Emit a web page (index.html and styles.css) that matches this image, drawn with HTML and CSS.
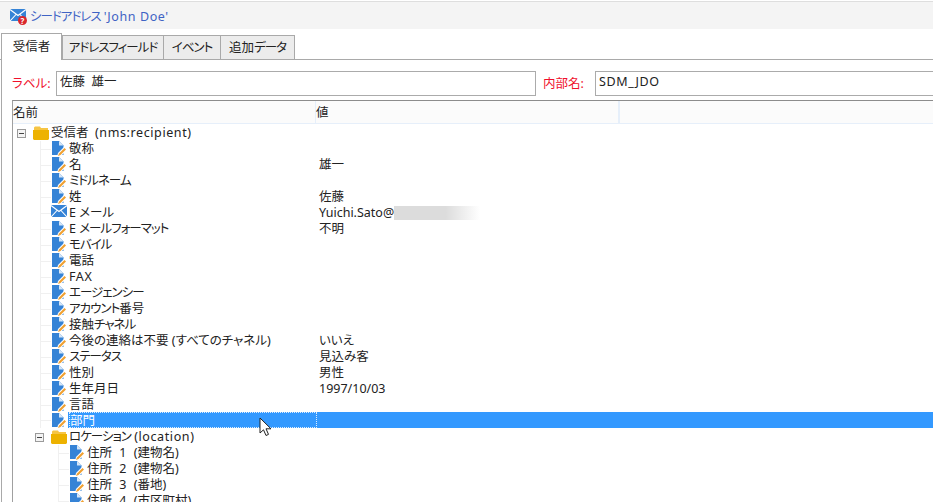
FILE: index.html
```html
<!DOCTYPE html>
<html>
<head>
<meta charset="UTF-8">
<title>シードアドレス</title>
<link rel="stylesheet" href="styles.css">
</head>
<body>
<svg class="defs" width="0" height="0">
	<symbol id="doc" viewBox="0 0 16 16">
		<path d="M0 0H7L11.500 4.500V14H0Z" fill="#3583d6"/>
		<path d="M7 0V4.500H11.500Z" fill="#d5e6f7"/>
		<path d="M5 16L6 12L12 6L15 9L9 15Z" fill="#fff"/>
		<path d="M6 15L7 12.500L12.500 7L14 8.500L8.500 14Z" fill="#f0a030"/>
	</symbol>
	<symbol id="folder" viewBox="0 0 16 14">
		<path d="M1 4V1.500L2 .5H7L8 2H15V4Z" fill="#f6c544"/>
		<path d="M0 4H16V13L15 14H1L0 13Z" fill="#edb200"/>
	</symbol>
	<symbol id="mail" viewBox="0 0 16 12">
		<path d="M0 0H16V12H0Z" fill="#3583d6"/>
		<path d="M0 .5L8 6.500L16 .5M0 12L6 5.500M16 12L10 5.500" fill="none" stroke="#fff" stroke-width="1.100"/>
	</symbol>
</svg>

<div class="titlebar">
	<span class="title-icon">
		<svg class="title-mail" width="16" height="12"><use href="#mail"/></svg>
		<span class="title-badge">?</span>
	</span>
	<span class="title-text"><span class="kana">シードアドレス</span> <span class="lat">'John Doe'</span></span>
</div>

<div class="tabs">
	<div class="tab active">受信者</div>
	<div class="tab tab-address"><span class="kana">アドレスフィールド</span></div>
	<div class="tab tab-event"><span class="kana">イベント</span></div>
	<div class="tab tab-extra">追加<span class="kana">データ</span></div>
</div>

<div class="panel">
	<div class="fields">
		<label class="field-label">ラベル:</label>
		<div class="input label-input">佐藤&nbsp; 雄一</div>
		<label class="field-label name-label">内部名:</label>
		<div class="input name-input lat">SDM_JDO</div>
	</div>

	<div class="tree">
		<div class="tree-head">
			<div class="col col-name">名前</div>
			<div class="col col-value">値</div>
			<div class="col col-rest"></div>
		</div>
		<div class="tree-body">
			<div class="row lvl0"><span class="toggle"></span><svg class="ico-folder"><use href="#folder"/></svg><span class="name">受信者&nbsp; <span class="lat">(nms:recipient)</span></span></div>

			<div class="row lvl1"><span class="elbow"></span><svg class="ico"><use href="#doc"/></svg><span class="name">敬称</span></div>
			<div class="row lvl1"><span class="elbow"></span><svg class="ico"><use href="#doc"/></svg><span class="name">名</span><span class="value">雄一</span></div>
			<div class="row lvl1"><span class="elbow"></span><svg class="ico"><use href="#doc"/></svg><span class="name kana">ミドルネーム</span></div>
			<div class="row lvl1"><span class="elbow"></span><svg class="ico"><use href="#doc"/></svg><span class="name">姓</span><span class="value">佐藤</span></div>
			<div class="row lvl1"><span class="elbow"></span><svg class="ico-mail"><use href="#mail"/></svg><span class="name">E メール</span><span class="value">Yuichi.Sato@<span class="blur"></span></span></div>
			<div class="row lvl1"><span class="elbow"></span><svg class="ico"><use href="#doc"/></svg><span class="name">E <span class="kana">メールフォーマット</span></span><span class="value">不明</span></div>
			<div class="row lvl1"><span class="elbow"></span><svg class="ico"><use href="#doc"/></svg><span class="name kana">モバイル</span></div>
			<div class="row lvl1"><span class="elbow"></span><svg class="ico"><use href="#doc"/></svg><span class="name">電話</span></div>
			<div class="row lvl1"><span class="elbow"></span><svg class="ico"><use href="#doc"/></svg><span class="name lat">FAX</span></div>
			<div class="row lvl1"><span class="elbow"></span><svg class="ico"><use href="#doc"/></svg><span class="name kana">エージェンシー</span></div>
			<div class="row lvl1"><span class="elbow"></span><svg class="ico"><use href="#doc"/></svg><span class="name"><span class="kana">アカウント</span>番号</span></div>
			<div class="row lvl1"><span class="elbow"></span><svg class="ico"><use href="#doc"/></svg><span class="name">接触<span class="kana">チャネル</span></span></div>
			<div class="row lvl1"><span class="elbow"></span><svg class="ico"><use href="#doc"/></svg><span class="name">今後の連絡は不要 (すべてのチャネル)</span><span class="value">いいえ</span></div>
			<div class="row lvl1"><span class="elbow"></span><svg class="ico"><use href="#doc"/></svg><span class="name kana">ステータス</span><span class="value">見込み客</span></div>
			<div class="row lvl1"><span class="elbow"></span><svg class="ico"><use href="#doc"/></svg><span class="name">性別</span><span class="value">男性</span></div>
			<div class="row lvl1"><span class="elbow"></span><svg class="ico"><use href="#doc"/></svg><span class="name">生年月日</span><span class="value">1997/10/03</span></div>
			<div class="row lvl1"><span class="elbow"></span><svg class="ico"><use href="#doc"/></svg><span class="name">言語</span></div>
			<div class="row lvl1 selected"><span class="elbow"></span><svg class="ico"><use href="#doc"/></svg><span class="name">部門</span></div>

			<div class="row lvl1b"><span class="toggle"></span><svg class="ico-folder"><use href="#folder"/></svg><span class="name"><span class="kana">ロケーション</span> <span class="lat">(location)</span></span></div>
			<div class="row lvl2"><span class="elbow"></span><svg class="ico"><use href="#doc"/></svg><span class="name addr">住所 1 (建物名)</span></div>
			<div class="row lvl2"><span class="elbow"></span><svg class="ico"><use href="#doc"/></svg><span class="name addr">住所 2 (建物名)</span></div>
			<div class="row lvl2"><span class="elbow"></span><svg class="ico"><use href="#doc"/></svg><span class="name addr">住所 3 (番地)</span></div>
			<div class="row lvl2"><span class="elbow"></span><svg class="ico"><use href="#doc"/></svg><span class="name addr">住所 4 (市区町村)</span></div>
		</div>
	</div>
</div>

<!-- マウスカーソル -->
<svg class="cursor" width="14" height="20" viewBox="0 0 14 20">
	<path d="M1 1V16L4.500 12.800L7 18.500L9.500 17.400L7 11.800H12Z" fill="#fff" stroke="#222" stroke-width="1"/>
</svg>
</body>
</html>
```

FILE: styles.css
```css
html, body
{
	margin: 0;
	height: 502px;
	overflow: hidden;
	background: #fff;
}
body
{
	position: relative;
	padding-top: 1px;
	box-sizing: border-box;
	font-family: "Noto Sans", "Noto Sans CJK JP", sans-serif;
	font-size: 12.500px;
	font-feature-settings: "palt";
	color: #222;
}
.defs
{
	position: absolute;
}
.lat
{
	letter-spacing: .6px;
}
.kana
{
	letter-spacing: -1px;
}
.addr
{
	word-spacing: 4px;
}

/* タイトル */
.titlebar
{
	display: flex;
	align-items: center;
	height: 27px;
	padding-left: 10px;
	background: #f4f4f4;
	border-top: 1px solid #dedede;
}
.title-icon
{
	position: relative;
	width: 20px;
	height: 20px;
}
.title-mail
{
	display: block;
	margin-top: 3px;
}
.title-badge
{
	position: absolute;
	left: 8px;
	top: 10px;
	width: 9px;
	height: 9px;
	border-radius: 50%;
	background: #d9262c;
	color: #fff;
	font-size: 8px;
	font-weight: bold;
	line-height: 9px;
	text-align: center;
}
.title-text
{
	color: #3f63c4;
}

/* タブ */
.tabs
{
	display: flex;
	align-items: flex-end;
	height: 26px;
	margin-top: 4px;
	padding-left: 1px;
	border-bottom: 1px solid #a9a9a9;
}
.tab
{
	height: 24px;
	margin-left: -1px;
	line-height: 23px;
	text-align: center;
	box-sizing: border-box;
	background: #ececec;
	border: 1px solid #a9a9a9;
	border-bottom: none;
}
.tab.active
{
	position: relative;
	height: 27px;
	width: 61px;
	margin-left: 0;
	margin-bottom: -1px;
	margin-right: 1px;
	line-height: 26px;
	background: #fff;
}
.tab-address
{
	width: 102px;
}
.tab-event
{
	width: 58px;
}
.tab-extra
{
	width: 75px;
}

/* パネル */
.panel
{
	margin-left: 1px;
	padding: 11px 0 0 10px;
	border-left: 1px solid #a9a9a9;
}
.fields
{
	display: flex;
	align-items: center;
	height: 25px;
}
.field-label
{
	flex-shrink: 0;
	width: 44px;
	margin-top: -3px;
	color: #f0102c;
}
.name-label
{
	width: 52px;
	margin-left: 7px;
}
.input
{
	flex-shrink: 0;
	height: 25px;
	padding-left: 3px;
	box-sizing: border-box;
	line-height: 20px;
	border: 1px solid #ababab;
	background: #fff;
}
.label-input
{
	width: 480px;
}
.name-input
{
	width: 360px;
}

/* ツリー */
.tree
{
	width: 960px;
	margin-top: 4px;
	border-left: 1px solid #a0a0a0;
	border-top: 1px solid #8c8c8c;
}
.tree-head
{
	display: flex;
	height: 23px;
	background: #fbfbfb;
	border-bottom: 1px solid #e6effa;
	box-sizing: border-box;
}
.col
{
	line-height: 23px;
	box-sizing: border-box;
	border-right: 1px solid #e6effa;
}
.col-name
{
	width: 303px;
}
.col-value
{
	width: 303px;
}
.tree-body
{
	padding-top: 1px;
}
.row
{
	position: relative;
	display: flex;
	align-items: center;
	height: 16px;
	line-height: 16px;
	white-space: nowrap;
}
.lvl0
{
	padding-left: 4px;
}
.lvl1
{
	padding-left: 27px;
}
.lvl1b
{
	padding-left: 22px;
}
.lvl2
{
	padding-left: 45px;
}
.toggle
{
	position: relative;
	width: 9px;
	height: 9px;
	margin-right: 7px;
	box-sizing: border-box;
	border: 1px solid #9a9a9a;
	background: #f4f4f4;
}
.toggle::after
{
	content: "";
	position: absolute;
	left: 1px;
	top: 3px;
	width: 5px;
	height: 1px;
	background: #444;
}
.elbow
{
	width: 12px;
	height: 16px;
	flex-shrink: 0;
	box-sizing: border-box;
	border-left: 1px solid #f0f0f0;
	background: linear-gradient(#f0f0f0, #f0f0f0) no-repeat 0 8px / 10px 1px;
}
.ico
{
	width: 16px;
	height: 16px;
	flex-shrink: 0;
	margin-right: 1px;
}
.ico-mail
{
	width: 16px;
	height: 12px;
	flex-shrink: 0;
	margin: -4px 2px 0 -1px;
}
.ico-folder
{
	width: 16px;
	height: 14px;
	flex-shrink: 0;
	margin-right: 2px;
}
.value
{
	position: absolute;
	left: 306px;
	display: flex;
	align-items: center;
}
.blur
{
	display: inline-block;
	width: 86px;
	height: 14px;
	background: linear-gradient(to right, #dcdcdc 60%, #fff);
}

/* 選択行 */
.selected
{
	margin-top: -1px;
	margin-bottom: 1px;
	background: linear-gradient(#3399ff, #3399ff) no-repeat 55px 0;
}
.selected .ico
{
	margin-top: 2px;
}
.selected .name
{
	display: block;
	width: 248px;
	height: 16px;
	box-sizing: border-box;
	color: #fff;
	border: 1px dotted #dcecff;
	line-height: 15px;
}

.cursor
{
	position: absolute;
	left: 259px;
	top: 417px;
}
```
